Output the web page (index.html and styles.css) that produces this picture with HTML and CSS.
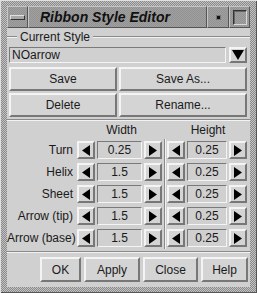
FILE: index.html
```html
<!DOCTYPE html>
<html lang="en">
<head>
  <meta charset="UTF-8" />
  <title>Ribbon Style Editor</title>
  <link rel="stylesheet" href="styles.css">
</head>
<body>
  <div class="window">
    <div class="titlebar">
      <div class="tb-btn menu"><span class="bar"></span></div>
      <div class="title">Ribbon Style Editor</div>
      <div class="tb-btn min"><span class="dot"></span></div>
      <div class="tb-btn max"><span class="sq"></span></div>
    </div>
    <div class="content">
      <div class="group-label"><span>Current Style</span></div>
      <div class="combo">
        <div class="field">NOarrow</div>
        <div class="btn arrow"><svg width="12" height="10" viewBox="0 0 12 10"><path d="M0 0H12L6 10Z" fill="#000"/></svg></div>
      </div>
      <div class="btn-grid">
        <div class="btn">Save</div>
        <div class="btn">Save As...</div>
        <div class="btn">Delete</div>
        <div class="btn">Rename...</div>
      </div>
      <div class="sep"></div>
      <div class="params">
        <div class="head"></div>
        <div class="head">Width</div>
        <div class="head"></div>
        <div class="head">Height</div>
      </div>
      <div class="params rows"></div>
      <div class="sep"></div>
      <div class="actions">
        <div class="btn ok">OK</div>
        <div class="btn apply">Apply</div>
        <div class="btn close">Close</div>
        <div class="btn help">Help</div>
      </div>
    </div>
  </div>

<script>
  const rows = [
    ['Turn', '0.25', '0.25'],
    ['Helix', '1.5', '0.25'],
    ['Sheet', '1.5', '0.25'],
    ['Arrow (tip)', '1.5', '0.25'],
    ['Arrow (base)', '1.5', '0.25']
  ];
  const left = '<svg width="8" height="11" viewBox="0 0 8 11"><path d="M8 0V11L0 5.5Z" fill="#000"/></svg>';
  const right = '<svg width="8" height="11" viewBox="0 0 8 11"><path d="M0 0V11L8 5.5Z" fill="#000"/></svg>';

  function spinner(value, cls) {
    return `
      <div class="spin ${cls}">
        <div class="btn arrow">${left}</div>
        <div class="value">${value}</div>
        <div class="btn arrow">${right}</div>
      </div>`;
  }

  const grid = document.querySelector('.rows');
  rows.forEach(([name, w, h]) => {
    grid.innerHTML += `
      <div class="label">${name}</div>
      ${spinner(w, 'w')}
      <div class="divider"></div>
      ${spinner(h, 'h')}`;
  });
</script>
</body>
</html>
```

FILE: styles.css
```css
body {
  margin: 0;
  font-family: "Liberation Sans", Arial, sans-serif;
  font-size: 12px;
  color: #000;
}
.window {
  width: 257px;
  height: 293px;
  box-sizing: border-box;
  padding: 6px 7px 6px 7px;
  display: flex;
  flex-direction: column;
  background-color: #a4a4a4;
  background-image: repeating-conic-gradient(#8a8a8a 0 25%, #c2c2c2 0 50%);
  background-size: 2px 2px;
  box-shadow: inset 1px 1px 0 #e0e0e0, inset -1px -1px 0 #555;
}

.titlebar {
  height: 22px;
  display: flex;
  background-color: #989898;
  background-image: repeating-conic-gradient(#929292 0 25%, #a0a0a0 0 50%);
  background-size: 2px 2px;
}
.tb-btn,
.title {
  box-sizing: border-box;
  border: 1px solid;
  border-color: #c6c6c6 #555 #555 #c6c6c6;
  display: flex;
  align-items: center;
  justify-content: center;
}
.tb-btn.menu { width: 21px; }
.tb-btn.min { width: 22px; }
.tb-btn.max { width: 21px; }
.title {
  flex: 1;
  justify-content: flex-start;
  padding-left: 11px;
  font-weight: bold;
  font-style: italic;
  font-size: 14px;
  color: #111;
}
.bar {
  width: 13px;
  height: 3px;
  background: #a8a8a8;
  border: 1px solid;
  border-color: #e0e0e0 #333 #333 #e0e0e0;
}
.dot {
  width: 3px;
  height: 3px;
  background: #111;
  box-shadow: 0 0 0 1px #777;
}
.sq {
  width: 12px;
  height: 13px;
  border: 1px solid;
  border-color: #333 #d8d8d8 #d8d8d8 #333;
  box-shadow: inset 1px 1px 0 #666;
}

.content {
  flex: 1;
  background: #d0d0d0;
  display: flex;
  flex-direction: column;
  color: #1a1a1a;
}
.group-label {
  height: 19px;
  display: flex;
  align-items: center;
  padding-bottom: 2px;
  box-sizing: border-box;
}
.group-label::before,
.group-label::after {
  content: "";
  height: 0;
  border-top: 1px solid #8a8a8a;
  border-bottom: 1px solid #f2f2f2;
}
.group-label::before { width: 10px; }
.group-label::after { flex: 1; }
.group-label span {
  padding: 0 3px;
}

.btn {
  box-sizing: border-box;
  border: 2px solid;
  border-color: #f4f4f4 #777 #777 #f4f4f4;
  background: #d4d4d4;
  display: flex;
  align-items: center;
  justify-content: center;
}

.combo {
  height: 16px;
  display: flex;
  gap: 3px;
  padding: 0 3px 0 2px;
}
.combo .field {
  flex: 1;
  box-sizing: border-box;
  border: 1px solid;
  border-color: #7a7a7a #f4f4f4 #f4f4f4 #7a7a7a;
  padding-left: 2px;
  line-height: 14px;
  font-size: 12px;
}
.combo .arrow {
  width: 18px;
}

.btn-grid {
  margin-top: 4px;
  padding: 0 3px 0 2px;
  display: grid;
  grid-template-columns: 108px 1fr;
  grid-auto-rows: 24px;
  gap: 2px;
}

.sep {
  margin-top: 2px;
  border-top: 1px solid #8a8a8a;
  border-bottom: 1px solid #f2f2f2;
}

.params {
  display: grid;
  grid-template-columns: 69px 88px 2px 84px;
}
.head {
  height: 18px;
  line-height: 19px;
  text-align: center;
}
.params .head:nth-child(2) { padding-left: 3px; }
.rows {
  grid-auto-rows: 22px;
}
.label {
  text-align: right;
  line-height: 22px;
  padding-right: 3px;
  white-space: nowrap;
}
.divider {
  border-left: 1px solid #8a8a8a;
  border-right: 1px solid #f2f2f2;
}
.spin {
  display: flex;
  gap: 2px;
  align-items: center;
  padding-left: 1px;
}
.spin.w { padding-right: 2px; }
.spin.h { padding-right: 3px; }
.spin .arrow {
  width: 18px;
  height: 18px;
}
.spin .value {
  flex: 1;
  height: 18px;
  box-sizing: border-box;
  border: 1px solid;
  border-color: #7a7a7a #f4f4f4 #f4f4f4 #7a7a7a;
  text-align: center;
  line-height: 16px;
}

.actions {
  margin-top: 4px;
  height: 25px;
  display: flex;
  justify-content: flex-end;
  gap: 3px;
  padding-right: 2px;
}
.actions .ok { width: 41px; }
.actions .apply { width: 56px; }
.actions .close { width: 55px; }
.actions .help { width: 47px; }
```
